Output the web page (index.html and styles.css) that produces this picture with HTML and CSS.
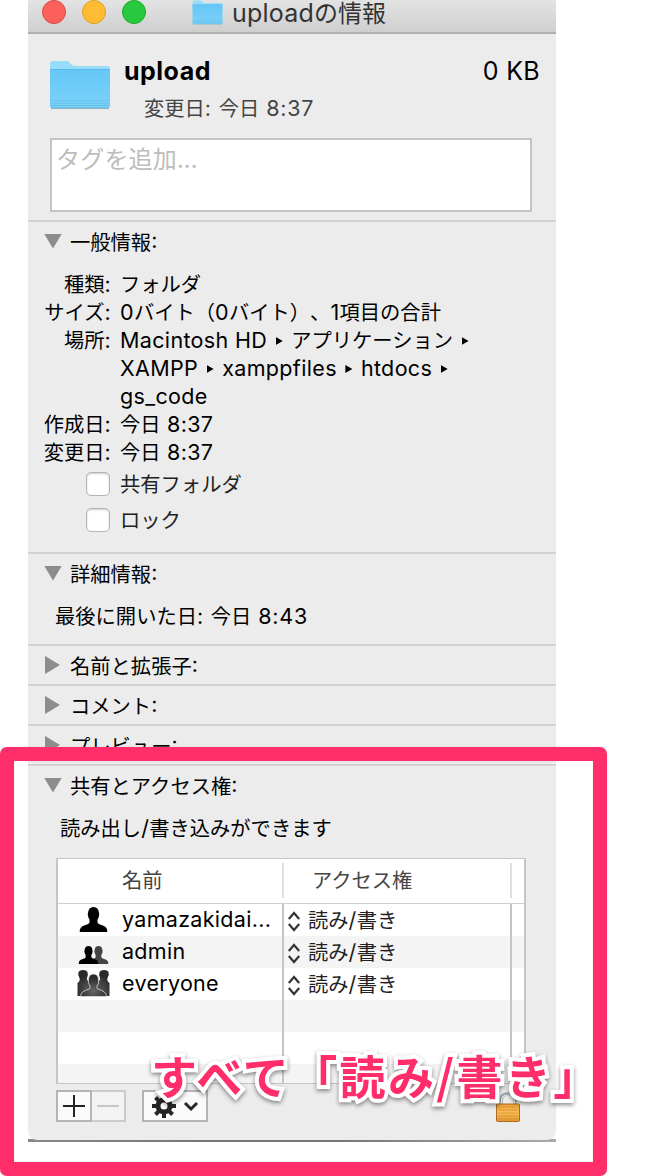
FILE: index.html
```html
<!DOCTYPE html>
<html lang="ja">
<head>
<meta charset="utf-8">
<title>uploadの情報</title>
<link rel="stylesheet" href="styles.css">
</head>
<body>
<svg class="defs" width="0" height="0">
  <defs>
    <linearGradient id="folderFront" x1="0" y1="0" x2="0" y2="1"><stop offset="0" stop-color="#65c6f6"/><stop offset="1" stop-color="#7bd2fa"/></linearGradient>
    <linearGradient id="gold" x1="0" y1="0" x2="0" y2="1"><stop offset="0" stop-color="#e9a13a"/><stop offset=".5" stop-color="#fbbf57"/><stop offset="1" stop-color="#e0952f"/></linearGradient>
    <radialGradient id="crowd" cx=".5" cy=".75" r=".6"><stop offset="0" stop-color="#666"/><stop offset="1" stop-color="#292929"/></radialGradient>
    <symbol id="folder" viewBox="0 0 62 50">
      <path d="M1 4Q1 1 4 1H18Q20 1 21 3L23 5Q24 6 26 6H58Q61 6 61 9V20H1Z" fill="#97dcfb"/>
      <path d="M1 11Q1 9 3 9H59Q61 9 61 11V46Q61 48 59 48H3Q1 48 1 46Z" fill="url(#folderFront)"/>
      <path d="M1 9.500H61" stroke="#55b5e7" stroke-width=".7"/>
      <path d="M1 40.500H61M1 43H61M1 45.500H61" stroke="#65bfe9" stroke-width=".9"/>
      <path d="M2 48.200H60" stroke="#5a9dbd" stroke-width="1"/>
    </symbol>
    <symbol id="person" viewBox="0 0 28 25"><path d="M8.500 6Q9 0 14 0T19.500 6Q20 7 19.500 9Q19 11 18 12.500V15.500Q18.500 17 22 18Q28 19.500 28 25H0Q0 19.500 6 18Q9.500 17 10 15.500V12.500Q9 11 8.500 9Q8 7 8.500 6Z"/></symbol>
    <symbol id="chooser" viewBox="0 0 12 21"><path d="M.800 8L6 2L11.200 8M.800 13L6 19L11.200 13" fill="none" stroke="#333" stroke-width="2.200"/></symbol>
  </defs>
</svg>
<main class="window">
  <header class="titlebar">
    <div class="lights"><i class="light red"></i><i class="light yellow"></i><i class="light green"></i></div>
    <svg class="title-folder" viewBox="0 0 31 25"><use href="#folder" width="31" height="25"/></svg>
    <h1 class="title"><span class="en">upload</span>の情報</h1>
  </header>
  <section class="summary">
    <div class="summary-row">
      <svg class="big-folder"><use href="#folder"/></svg>
      <div class="summary-text">
        <div class="name-row"><b class="name">upload</b><span class="size">0 KB</span></div>
        <div class="modified">変更日<span class="en">: </span>今日<span class="en"> 8:37</span></div>
      </div>
    </div>
    <div class="tags">タグを追加...</div>
  </section>
  <section class="general">
    <h2 class="heading"><i class="tri down"></i>一般情報<span class="en">:</span></h2>
    <dl class="facts">
      <dt>種類<span class="en">:</span></dt><dd>フォルダ</dd>
      <dt>サイズ<span class="en">:</span></dt><dd><span class="en">0</span>バイト（<span class="en">0</span>バイト）、<span class="en">1</span>項目の合計</dd>
      <dt>場所<span class="en">:</span></dt><dd><span class="en">Macintosh HD</span><i class="step"></i>アプリケーション<i class="step"></i><br><span class="en">XAMPP</span><i class="step"></i><span class="en">xamppfiles</span><i class="step"></i><span class="en">htdocs</span><i class="step"></i><br><span class="en">gs_code</span></dd>
      <dt>作成日<span class="en">:</span></dt><dd>今日<span class="en"> 8:37</span></dd>
      <dt>変更日<span class="en">:</span></dt><dd>今日<span class="en"> 8:37</span></dd>
    </dl>
    <div class="option"><i class="box"></i><span class="label">共有フォルダ</span></div>
    <div class="option"><i class="box"></i><span class="label">ロック</span></div>
  </section>
  <section class="details">
    <h2 class="heading"><i class="tri down"></i>詳細情報<span class="en">:</span></h2>
    <p class="opened">最後に開いた日<span class="en">: </span>今日<span class="en"> 8:43</span></p>
  </section>
  <section class="folded"><h2 class="heading"><i class="tri right"></i>名前と拡張子<span class="en">:</span></h2></section>
  <section class="folded"><h2 class="heading"><i class="tri right"></i>コメント<span class="en">:</span></h2></section>
  <section class="folded"><h2 class="heading"><i class="tri right"></i>プレビュー<span class="en">:</span></h2></section>
  <section class="sharing">
    <h2 class="heading"><i class="tri down"></i>共有とアクセス権<span class="en">:</span></h2>
    <p class="rights">読み出し<span class="en">/</span>書き込みができます</p>
    <div class="table">
      <div class="row head"><div class="cell who">名前</div><div class="cell access">アクセス権</div><div class="cell"></div></div>
      <div class="row"><div class="cell user"><svg class="avatar" viewBox="0 0 32 32"><use href="#person" x="2" y="3" width="28" height="25"/></svg><span class="en">yamazakidai...</span></div><div class="cell level"><svg class="chooser"><use href="#chooser"/></svg><span class="label">読み<span class="en">/</span>書き</span></div><div class="cell"></div></div>
      <div class="row"><div class="cell user"><svg class="avatar" viewBox="0 0 32 32"><use href="#person" x="11" y="10" width="20" height="18" fill="#444"/><use href="#person" x="1" y="10" width="20" height="18"/></svg><span class="en">admin</span></div><div class="cell level"><svg class="chooser"><use href="#chooser"/></svg><span class="label">読み<span class="en">/</span>書き</span></div><div class="cell"></div></div>
      <div class="row"><div class="cell user"><svg class="avatar" viewBox="0 0 32 32"><path d="M0 28V15Q3 13 2 10Q0 7 1 4Q2 2 5.500 2T10 4Q11 7 9.500 10Q9 13 13 14V28ZM32 28V15Q29 13 30 10Q32 7 31 4Q30 2 26.500 2T22 4Q21 7 22.500 10Q23 13 19 14V28Z" fill="url(#crowd)"/><path d="M11 12Q11 6 16 6T21 12Q22 15 19.500 18Q19 20 20 21Q29 23 29 28.500H3Q3 23 12 21Q13 20 12.500 18Q10 15 11 12Z" fill="url(#crowd)" stroke="#ddd" stroke-width=".8"/></svg><span class="en">everyone</span></div><div class="cell level"><svg class="chooser"><use href="#chooser"/></svg><span class="label">読み<span class="en">/</span>書き</span></div><div class="cell"></div></div>
      <div class="row"><div class="cell"></div><div class="cell"></div><div class="cell"></div></div>
      <div class="row"><div class="cell"></div><div class="cell"></div><div class="cell"></div></div>
      <div class="row last"><div class="cell"></div><div class="cell"></div><div class="cell"></div></div>
    </div>
    <div class="actions">
      <svg class="add-remove" viewBox="0 0 70 32" fill="none"><rect x="35" y="1" width="34" height="30" fill="#f3f3f3" stroke="#ccc" stroke-width="2"/><rect x="1" y="1" width="34" height="30" fill="#fafafa" stroke="#b4b4b4" stroke-width="2"/><path d="M7 16H29M18 5V27" stroke="#222" stroke-width="2"/><path d="M41 16H63" stroke="#b8b8b8" stroke-width="1.500"/></svg>
      <svg class="gear" viewBox="0 0 66 32" fill="none"><rect x="1" y="1" width="64" height="30" fill="#fafafa" stroke="#b4b4b4" stroke-width="2"/><circle cx="22" cy="16" r="6" stroke="#252525" stroke-width="5"/><g stroke="#252525" stroke-width="4"><path d="M22 4V9M22 23V28M10 16H15M29 16H34M13.500 7.500L17 11M27 21L30.500 24.500M13.500 24.500L17 21M27 11L30.500 7.500"/></g><path d="M43 13L49 19L55 13" stroke="#252525" stroke-width="3"/></svg>
      <svg class="lock" viewBox="0 0 26 30"><path d="M6 14V9Q6 2 13 2T20 9V14" fill="none" stroke="#97a5ae" stroke-width="3.400"/><path d="M6.500 14V9Q6.500 3 13 3T19.500 9V14" fill="none" stroke="#eef2f3" stroke-width="1.200"/><rect x="1.500" y="12" width="23" height="17.500" rx="1" fill="url(#gold)" stroke="#a86722"/><path d="M3 15H23M3 18H23M3 21H23M3 24H23M3 27H23" stroke="#d98d30" stroke-width=".8"/></svg>
    </div>
  </section>
</main>
<div class="highlight"></div>
<div class="callout">すべて「読み/書き」</div>
</body>
</html>
```
FILE: styles.css
```css
* { box-sizing: border-box; }
body { margin: 0; width: 666px; height: 1176px; position: relative; overflow: hidden; background: #fff; color: #000; font: 20.3px/28px "Noto Sans CJK JP", sans-serif; text-spacing-trim: space-all; }
h1, h2, p, dl, dd { margin: 0; font-weight: 400; font-size: inherit; }
.defs { position: absolute; }
.en { font-family: Inter, "Noto Sans CJK JP", sans-serif; font-size: 21.5px; letter-spacing: .3px; line-height: 1; white-space: pre; }
.window { width: 528px; height: 1142px; margin-left: 28px; background: linear-gradient(90deg, #888, #777 32%, #777 60%, #aaa) bottom / 100% 3px no-repeat; }
.titlebar { height: 34px; display: flex; align-items: flex-start; background: linear-gradient(#e3e3e3, #cfcfcf); border-bottom: 2px solid #b1b1b1; }
.lights { display: flex; gap: 16px; margin-left: 14px; width: 150px; }
.light { width: 24px; height: 24px; border-radius: 50%; border: 1px solid; }
.red { background: #fc605b; border-color: #e2463f; }
.yellow { background: #fdbc34; border-color: #dfa023; }
.green { background: #27c93f; border-color: #18ac29; }
.title-folder { width: 31px; height: 25px; }
.title { margin-left: 9px; font-size: 24px; line-height: 24px; color: #333; }
.title .en { font-size: 25px; letter-spacing: .2px; }
section { background: #ececec; border-bottom: 2px solid #d2d2d2; }
.summary { height: 188px; padding: 26px 16px 0 21px; }
.summary-row { display: flex; height: 78px; }
.big-folder { width: 62px; height: 50px; }
.summary-text { flex: 1; padding-left: 13px; }
.name-row { display: flex; justify-content: space-between; font: 25px/22px Inter, sans-serif; }
.size { letter-spacing: .3px; }
.name { font-weight: 700; letter-spacing: .5px; }
.modified { margin: 11px 0 0 20px; color: #444; }
.modified .en, .opened .en { letter-spacing: .8px; }
.tags { width: 482px; height: 74px; margin-left: 1px; padding: 0 4px; border: 2px solid #c4c4c4; background: #fff; color: #bdbdbd; font-size: 24px; line-height: 36px; letter-spacing: .2px; }
.heading { display: flex; align-items: center; height: 38px; }
.tri { width: 18px; height: 15px; margin: 0 8px 0 16px; background: #8c8c8c; clip-path: polygon(0 0, 100% 0, 50% 100%); }
.tri.right { width: 15px; height: 18px; margin: 0 10px 0 17px; clip-path: polygon(0 0, 100% 50%, 0 100%); }
.general { height: 332px; }
.facts { display: grid; grid-template-columns: 83px 1fr; column-gap: 9px; padding-top: 9px; }
.facts dd .en { letter-spacing: .35px; }
dt { text-align: right; }
.step { display: inline-block; width: 7px; height: 8px; margin: 0 8.500px; background: #000; vertical-align: 3px; clip-path: polygon(0 0, 100% 50%, 0 100%); }
.option { display: flex; align-items: center; height: 36px; color: #222; }
.facts + .option { margin-top: 1px; }
.label { margin-top: -2px; }
.box { width: 24px; height: 24px; margin: 0 10px 0 58px; border: 1px solid #b5b5b5; border-radius: 5px; background: #fff; box-shadow: inset 0 1px 2px #ccc; }
.details { height: 92px; }
.opened { padding: 9px 0 0 27px; }
.folded { height: 40px; }
.sharing { height: 374px; border: 0; border-radius: 0 0 9px 9px; }
.rights { padding: 9px 0 0 32px; }
.table { width: 470px; height: 226px; margin: 17px 0 0 28px; border: 2px solid #c5c5c5; border-top-width: 1px; background: #fff; }
.row { display: grid; grid-template-columns: 226px 228px 1fr; height: 32px; line-height: 32px; }
.row:nth-child(odd):not(.head) { background: #f4f4f4; }
.row.head { height: 45px; line-height: 32px; padding: 4px 0 5px; border-bottom: 1px solid #cfcfcf; color: #444; }
.cell:not(:last-child) { border-right: 2px solid #c5c5c5; }
.head .cell:not(:last-child) { border-color: #e0e0e0; }
.row.last { height: 19px; }
.who { padding-left: 64px; }
.access { padding-left: 28px; }
.user { display: flex; align-items: center; padding-left: 19px; }
.avatar { width: 33px; height: 32px; margin-right: 12px; }
.level { display: flex; align-items: center; color: #222; }
.chooser { width: 12px; height: 21px; margin: 2px 8px 0 4px; }
.actions { display: flex; align-items: flex-end; padding: 6px 35px 0 28px; }
.add-remove { width: 70px; height: 32px; margin-right: 16px; }
.gear { width: 66px; height: 32px; margin-right: auto; }
.lock { width: 26px; height: 30px; }
.actions svg:not(.lock) { margin-bottom: 0; }
.highlight { position: absolute; left: 0; top: 747px; width: 607px; height: 429px; border: 14px solid #ff2d69; border-radius: 7px; box-shadow: inset 0 0 1px #aaa, 0 0 1px #aaa; }
.callout { position: absolute; left: 151px; top: 1046px; font-size: 46px; letter-spacing: 2.4px; line-height: 56px; font-weight: 700; color: #ff2d69; white-space: nowrap; -webkit-text-stroke: 8px #fff; stroke-linejoin: round; paint-order: stroke fill; filter: drop-shadow(0 2px 2px rgba(0,0,0,.45)); }
```
